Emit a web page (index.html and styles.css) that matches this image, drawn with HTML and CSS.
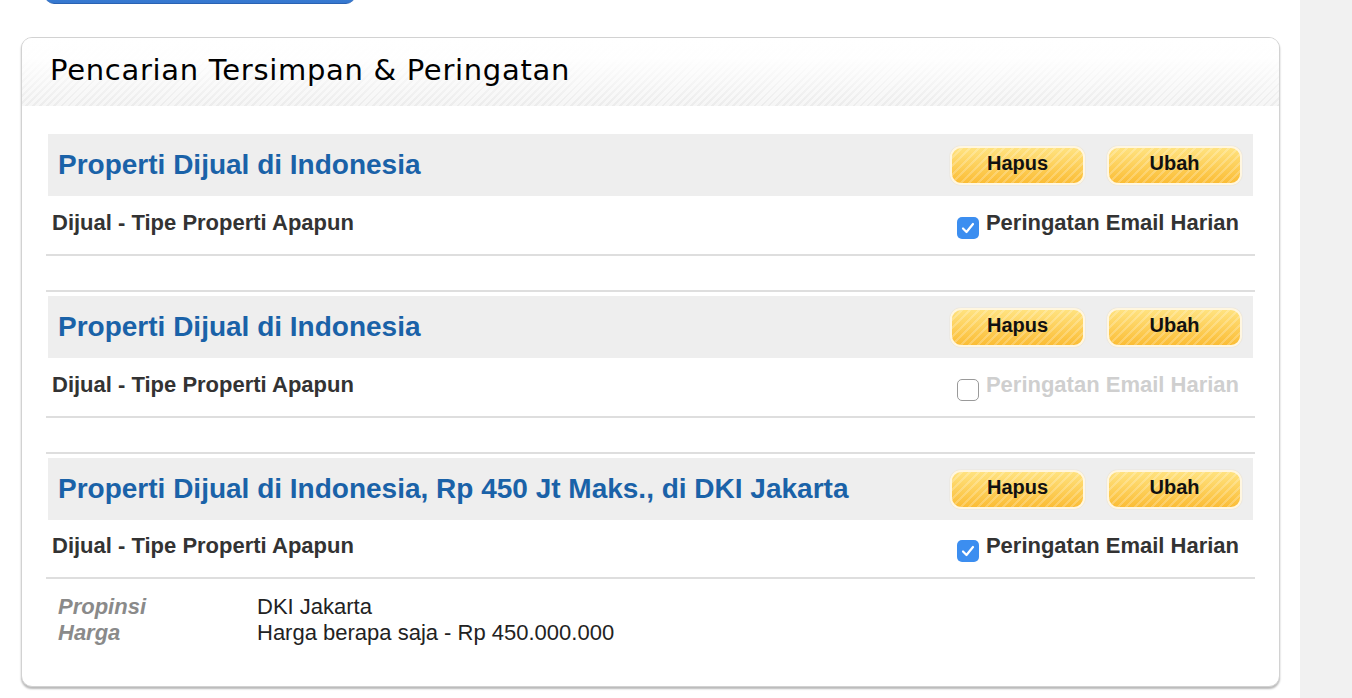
FILE: index.html
```html
<!DOCTYPE html>
<html lang="id">
<head>
<meta charset="utf-8">
<title>Pencarian Tersimpan &amp; Peringatan</title>
<link rel="stylesheet" href="styles.css">
</head>
<body>
<div class="page">
  <main class="main">
    <div class="top-btn"></div>
    <section class="panel">
      <header class="panel-head">
        <h1 class="panel-title">Pencarian Tersimpan &amp; Peringatan</h1>
      </header>
      <div class="panel-body">
        <div class="item item-first">
          <div class="item-head">
            <h2 class="item-title">Properti Dijual di Indonesia</h2>
            <div class="actions">
              <button class="btn">Hapus</button>
              <button class="btn">Ubah</button>
            </div>
          </div>
          <div class="item-row">
            <span class="item-sub">Dijual - Tipe Properti Apapun</span>
            <label class="alert">
              <span class="cb cb-on"><svg viewBox="0 0 22 22" width="22" height="22"><path d="M6 11.5 L9.5 15 L16 7" fill="none" stroke="#fff" stroke-width="2.2" stroke-linecap="round" stroke-linejoin="round"/></svg></span>
              <span class="alert-text">Peringatan Email Harian</span>
            </label>
          </div>
        </div>

        <div class="item">
          <div class="item-head">
            <h2 class="item-title">Properti Dijual di Indonesia</h2>
            <div class="actions">
              <button class="btn">Hapus</button>
              <button class="btn">Ubah</button>
            </div>
          </div>
          <div class="item-row">
            <span class="item-sub">Dijual - Tipe Properti Apapun</span>
            <label class="alert alert-off">
              <span class="cb cb-off"></span>
              <span class="alert-text">Peringatan Email Harian</span>
            </label>
          </div>
        </div>

        <div class="item">
          <div class="item-head">
            <h2 class="item-title">Properti Dijual di Indonesia, Rp 450 Jt Maks., di DKI Jakarta</h2>
            <div class="actions">
              <button class="btn">Hapus</button>
              <button class="btn">Ubah</button>
            </div>
          </div>
          <div class="item-row">
            <span class="item-sub">Dijual - Tipe Properti Apapun</span>
            <label class="alert">
              <span class="cb cb-on"><svg viewBox="0 0 22 22" width="22" height="22"><path d="M6 11.5 L9.5 15 L16 7" fill="none" stroke="#fff" stroke-width="2.2" stroke-linecap="round" stroke-linejoin="round"/></svg></span>
              <span class="alert-text">Peringatan Email Harian</span>
            </label>
          </div>
          <dl class="details">
            <dt>Propinsi</dt><dd>DKI Jakarta</dd>
            <dt>Harga</dt><dd>Harga berapa saja - Rp 450.000.000</dd>
          </dl>
        </div>
      </div>
    </section>
  </main>
  <aside class="side"></aside>
</div>
</body>
</html>
```

FILE: styles.css
```css
* { box-sizing: border-box; }
html, body { margin: 0; padding: 0; background: #fff; }
body {
  font-family: "Liberation Sans", Arial, sans-serif;
  height: 698px;
  overflow: hidden;
}
.page {
  display: flex;
  min-height: 698px;
}
.main {
  width: 1300px;
  flex: none;
  padding-left: 21px;
}
.side {
  flex: 1;
  background: #f1f1f1;
}
.top-btn {
  width: 310px;
  height: 30px;
  margin-top: -26px;
  margin-left: 24px;
  border-radius: 9px;
  background: linear-gradient(#4b8fe0, #3577cf);
  border-bottom: 1px solid #2a62b3;
}
.panel {
  width: 1259px;
  margin-top: 33px;
  border: 1px solid #d2d2d2;
  border-radius: 11px;
  box-shadow: 0 2px 2px rgba(0,0,0,0.28);
  background: #fff;
  overflow: hidden;
}
.panel-head {
  height: 68px;
  display: flex;
  align-items: center;
  padding-left: 28px;
  background:
    linear-gradient(to bottom, #fff 0%, rgba(255,255,255,0.95) 30%, rgba(255,255,255,0) 100%),
    repeating-linear-gradient(135deg, #ececec 0 2px, #f6f6f6 2px 5px);
}
.panel-title {
  margin: 0;
  font-family: "DejaVu Sans", Verdana, sans-serif;
  font-weight: normal;
  font-size: 29px;
  color: #000;
  letter-spacing: 0.7px;
  margin-top: -4px;
}
.panel-body {
  padding: 28px 24px 40px 24px;
}
.item {
  margin-top: 34px;
  border-top: 2px solid #dedede;
  padding-top: 4px;
  border-bottom: 2px solid #dedede;
}
.item-first {
  margin-top: 0;
  border-top: none;
  padding-top: 0;
}
.item-head {
  margin: 0 2px;
  height: 62px;
  background: #eeeeee;
  display: flex;
  align-items: center;
  justify-content: space-between;
  padding: 0 11px 0 10px;
}
.item-title {
  margin: 0;
  font-size: 28px;
  font-weight: bold;
  color: #1a62a8;
}
.actions {
  display: flex;
  gap: 22px;
}
.btn {
  width: 135px;
  height: 39px;
  border: 2px solid #fff6e0;
  border-radius: 11px;
  background:
    repeating-linear-gradient(135deg, rgba(255,255,255,0.22) 0 2px, rgba(255,255,255,0) 2px 6px),
    linear-gradient(#ffe27f, #fbbd35);
  box-shadow: 0 0 1px rgba(190,140,30,0.4);
  font-family: "Liberation Sans", Arial, sans-serif;
  font-weight: bold;
  font-size: 20px;
  color: #111;
  padding: 0 0 3px 0;
  cursor: pointer;
}
.item-row {
  height: 58px;
  display: flex;
  align-items: center;
  justify-content: space-between;
  padding: 0 16px 0 6px;
}
.item-sub {
  font-size: 22px;
  font-weight: bold;
  color: #333;
  margin-top: -5px;
}
.alert {
  display: flex;
  align-items: center;
  gap: 7px;
  margin-top: -5px;
}
.alert-text {
  font-size: 22px;
  font-weight: bold;
  color: #333;
}
.alert-off .alert-text { color: #cfcfcf; }
.cb {
  width: 22px;
  height: 22px;
  border-radius: 5px;
  display: block;
  margin-top: 10px;
}
.cb svg { display: block; }
.cb-on { background: #3c8ef0; }
.cb-off {
  background: #fff;
  border: 1px solid #9a9a9a;
}
.item:last-child { border-bottom: none; }
.item:last-child .item-row { height: 59px; border-bottom: 2px solid #dedede; }
.details {
  display: grid;
  grid-template-columns: 199px auto;
  margin: 0;
  padding: 15px 12px 0 12px;
  font-size: 22px;
  line-height: 26px;
}
.details dt {
  font-weight: bold;
  font-style: italic;
  color: #8a8a8a;
}
.details dd {
  margin: 0;
  color: #222;
}
```
